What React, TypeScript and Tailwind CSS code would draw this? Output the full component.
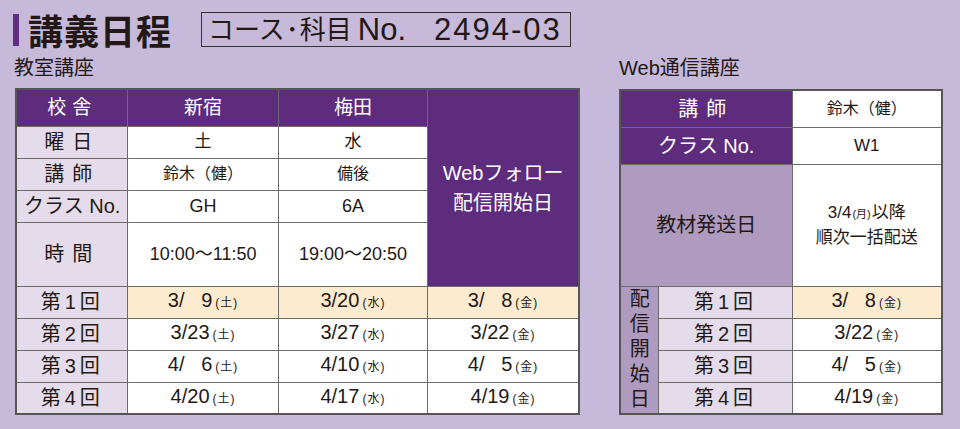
import type { ReactNode } from "react";

const FONT = { fontFamily: '"Liberation Sans", "Noto Sans CJK JP", sans-serif' };

const lessons = [
	{ no: "1", shinjuku: ["3/\u2007 9", "土"], umeda: ["3/20", "水"], web: ["3/\u2007 8", "金"] },
	{ no: "2", shinjuku: ["3/23", "土"], umeda: ["3/27", "水"], web: ["3/22", "金"] },
	{ no: "3", shinjuku: ["4/\u2007 6", "土"], umeda: ["4/10", "水"], web: ["4/\u2007 5", "金"] },
	{ no: "4", shinjuku: ["4/20", "土"], umeda: ["4/17", "水"], web: ["4/19", "金"] },
];

function DateText({ d }: { d: string[] }) {
	return (
		<span className="whitespace-pre text-[20px] leading-none">
			{d[0]}
			<span className="ml-[3px] text-[12px] tracking-[1px]">({d[1]})</span>
		</span>
	);
}

function Cell({
	children,
	className = "",
	rowSpan,
	colSpan,
}: {
	children?: ReactNode;
	className?: string;
	rowSpan?: number;
	colSpan?: number;
}) {
	return (
		<td
			rowSpan={rowSpan}
			colSpan={colSpan}
			className={`border border-[#6b6b6b] p-0 text-center align-middle ${className}`}
		>
			{children}
		</td>
	);
}

const label = "bg-[#e4dcea] text-[20px]";
const head = "bg-[#5d2c7d] text-white text-[20px]";
const mid = "bg-[#ae9bbf] text-[20px]";

export default function App() {
	return (
		<div
			className="h-[429px] w-[960px] overflow-hidden bg-[#c6b9da] text-[#231815]"
			style={FONT}
		>
			<header className="flex items-center pl-[13px] pt-[12px]">
				<div className="h-[32px] w-[6px] bg-[#5f2d80]" />
				<h1
					className="ml-[9px] text-[35px] font-bold leading-none tracking-[1px]"
					style={{ fontFamily: '"Noto Sans CJK JP", sans-serif' }}
				>
					講義日程
				</h1>
				<div className="ml-[29px] flex h-[35px] w-[370px] items-center whitespace-nowrap border border-[#333] pl-[6px] text-[26px] leading-none">
					コース<span className="mx-[1px]">･</span>科目
					<span className="ml-[6px] text-[31px]">No.</span>
					<span className="ml-[28px] text-[31px] tracking-[2px]">2494-03</span>
				</div>
			</header>

			<div className="flex pl-[15px] pt-[9px]">
				<section className="w-[565px]">
					<h2 className="mb-[8px] -ml-[1px] text-[20px] leading-[24px]">教室講座</h2>
					<table className="table-fixed border-collapse border-2 border-[#555]">
						<colgroup>
							<col className="w-[112px]" />
							<col className="w-[151px]" />
							<col className="w-[150px]" />
							<col className="w-[152px]" />
						</colgroup>
						<tbody>
							<tr className="h-[37px] bg-[#5d2c7d] text-[19px] text-white">
								<Cell className="tracking-[6px]">校舎</Cell>
								<Cell>新宿</Cell>
								<Cell>梅田</Cell>
								<Cell rowSpan={5} className={`${head} leading-[30px]`}>
									Webフォロー
									<br />
									配信開始日
								</Cell>
							</tr>
							<tr className="h-[32px] bg-white text-[17px]">
								<Cell className={`${label} tracking-[8px]`}>曜日</Cell>
								<Cell>土</Cell>
								<Cell>水</Cell>
							</tr>
							<tr className="h-[32px] bg-white text-[16px]">
								<Cell className={`${label} tracking-[8px]`}>講師</Cell>
								<Cell>鈴木（健）</Cell>
								<Cell>備後</Cell>
							</tr>
							<tr className="h-[32px] bg-white text-[18px]">
								<Cell className={`${label} whitespace-nowrap`}>クラス No.</Cell>
								<Cell>GH</Cell>
								<Cell>6A</Cell>
							</tr>
							<tr className="h-[64px] bg-white text-[18px]">
								<Cell className={`${label} tracking-[8px]`}>時間</Cell>
								<Cell>10:00～11:50</Cell>
								<Cell>19:00～20:50</Cell>
							</tr>
							{lessons.map((l, i) => (
								<tr
									key={l.no}
									className={`h-[32px] ${i === 0 ? "bg-[#fdebcf]" : "bg-white"}`}
								>
									<Cell className={`${label} tracking-[4px]`}>第{l.no}回</Cell>
									<Cell>
										<DateText d={l.shinjuku} />
									</Cell>
									<Cell>
										<DateText d={l.umeda} />
									</Cell>
									<Cell>
										<DateText d={l.web} />
									</Cell>
								</tr>
							))}
						</tbody>
					</table>
				</section>

				<section className="ml-[39px] w-[324px]">
					<h2 className="mb-[9px] text-[20px] leading-[24px]">Web通信講座</h2>
					<table className="table-fixed border-collapse border-2 border-[#555]">
						<colgroup>
							<col className="w-[39px]" />
							<col className="w-[134px]" />
							<col className="w-[151px]" />
						</colgroup>
						<tbody>
							<tr className="h-[37px] bg-white text-[16px]">
								<Cell colSpan={2} className={`${head} tracking-[8px]`}>
									講師
								</Cell>
								<Cell>鈴木（健）</Cell>
							</tr>
							<tr className="h-[37px] bg-white text-[17px]">
								<Cell colSpan={2} className={`${head} whitespace-nowrap`}>
									クラス No.
								</Cell>
								<Cell>W1</Cell>
							</tr>
							<tr className="h-[122px] bg-white text-[17px]">
								<Cell colSpan={2} className={mid}>
									教材発送日
								</Cell>
								<Cell className="leading-[23px]">
									3/4<span className="mx-[1px] text-[11px]">(月)</span>以降
									<br />
									順次一括配送
								</Cell>
							</tr>
							{lessons.map((l, i) => (
								<tr
									key={l.no}
									className={`h-[32px] ${i === 0 ? "bg-[#fdebcf]" : "bg-white"}`}
								>
									{i === 0 && (
										<Cell rowSpan={4} className={`${mid} leading-[25px]`}>
											配<br />信<br />開<br />始<br />日
										</Cell>
									)}
									<Cell className={`${label} tracking-[4px]`}>第{l.no}回</Cell>
									<Cell>
										<DateText d={l.web} />
									</Cell>
								</tr>
							))}
						</tbody>
					</table>
				</section>
			</div>
		</div>
	);
}
